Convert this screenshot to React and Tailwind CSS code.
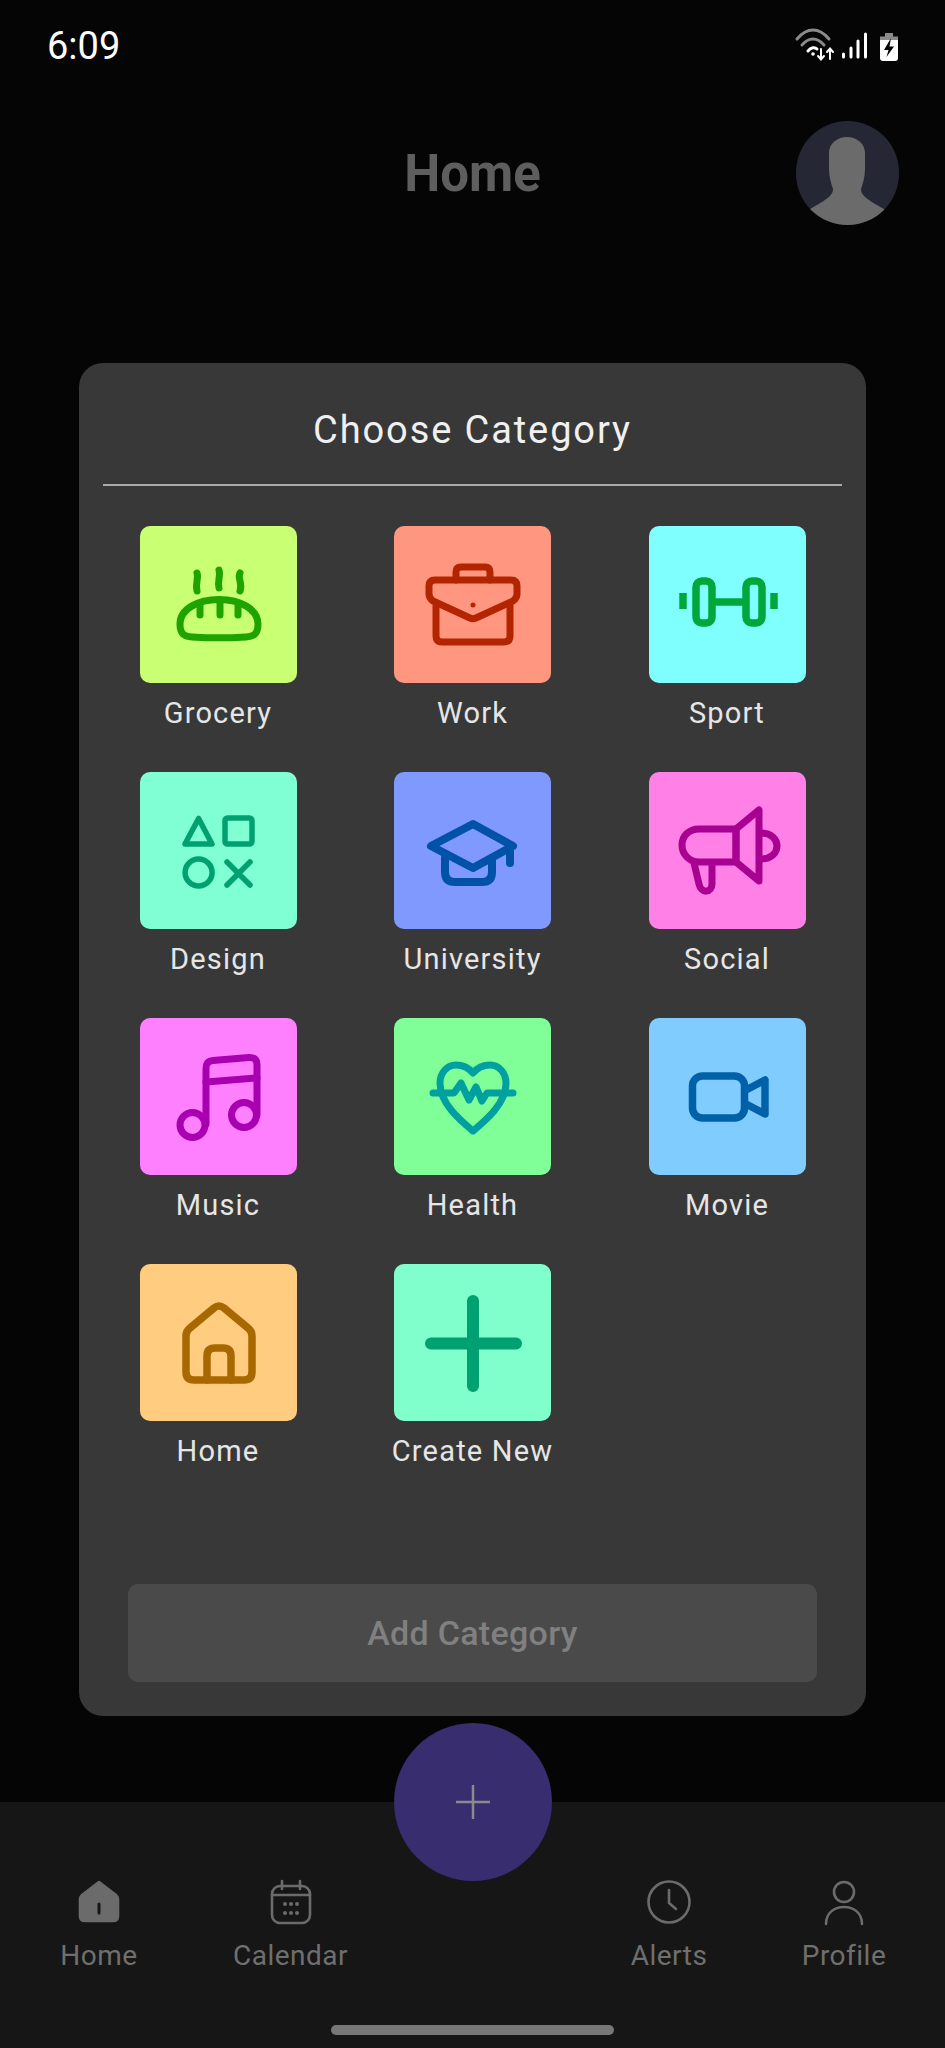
const Tile = ({ bg, color, label, children }) => (
  <div className="flex flex-col items-center w-[157px] h-[246px]">
    <div className={`w-[157px] h-[157px] rounded-[10px] shrink-0 ${bg}`}>
      <svg viewBox="0 0 157 157" className="w-full h-full" fill="none" stroke={color} strokeWidth="7" strokeLinecap="round" strokeLinejoin="round">
        {children}
      </svg>
    </div>
    <span className="mt-[10px] text-[29px] leading-[40px] tracking-[1.2px] text-[#e6e6e6] whitespace-nowrap">{label}</span>
  </div>
);

const items = [
  { label: "Grocery", bg: "bg-[#c8ff73]", color: "#1fa300", icon: (
    <>
      <path d="M79 73.5C100 73.5 118 83 118 98C118 108 114 110.5 106 111C90 112 68 112 52 111C44 110.5 40 108 40 98C40 83 58 73.5 79 73.5Z" />
      <path d="M60 79V89M80 77V89M98 79V89" />
      <path d="M57 47C59 52 55 57 57 65M79 44C81 50 77 55 79 62M100 47C97 52 103 57 100 65" />
    </>
  ) },
  { label: "Work", bg: "bg-[#ff9680]", color: "#b32400", icon: (
    <>
      <path d="M41 54H117Q123 54 123 60V68Q123 72 119 75L82 92Q79 93.5 76 92L39 75Q35 72 35 68V60Q35 54 41 54Z" />
      <path d="M42 80V110Q42 116 48 116H110Q116 116 116 110V80" />
      <path d="M62 54V46Q62 41 67 41H91Q96 41 96 46V54" />
      <circle cx="79" cy="79" r="2.5" fill="#b32400" stroke="none" />
    </>
  ) },
  { label: "Sport", bg: "bg-[#80ffff]", color: "#00a83c", icon: (
    <g strokeWidth="7.5" strokeLinecap="butt">
      <rect x="47" y="55" width="16" height="42" rx="6" />
      <rect x="97" y="55" width="16" height="42" rx="6" />
      <path d="M63 76H97M34 67V83M125 67V83" />
    </g>
  ) },
  { label: "Design", bg: "bg-[#80ffd4]", color: "#00a070", icon: (
    <g strokeWidth="5.5">
      <path d="M58.6 46.5L72 72H45Z" />
      <rect x="85" y="46" width="27" height="26" rx="2.5" />
      <circle cx="58.6" cy="100.5" r="13.5" />
      <path d="M87 90L110 113M110 90L87 113" />
    </g>
  ) },
  { label: "University", bg: "bg-[#8099ff]", color: "#0052a8", icon: (
    <g strokeWidth="8">
      <path d="M79 52L119 74L79 96L37 74Z" />
      <path d="M51 86V100Q51 110 61 110H88Q98 110 98 100V86" />
      <path d="M116 74V91" />
    </g>
  ) },
  { label: "Social", bg: "bg-[#ff80e6]", color: "#a80090", icon: (
    <>
      <path d="M87 57H50C40 57 33 64 33 73C33 82 40 90 50 90H87Z" />
      <path d="M87 57L110 38V109L87 90Z" />
      <path d="M112 61C122 61 128 67 128 74C128 81 122 87 112 87" />
      <path d="M45 91L50 112C52 122 63 121 63 112L63 91" />
    </>
  ) },
  { label: "Music", bg: "bg-[#ff80ff]", color: "#a800b0", icon: (
    <>
      <path d="M66 106V50Q66 43 73 42.5L109 39.5Q117 39 117 47V97" />
      <path d="M66 64L117 60" />
      <circle cx="52.5" cy="107" r="12.5" />
      <circle cx="104" cy="97" r="12.5" />
    </>
  ) },
  { label: "Health", bg: "bg-[#80ff99]", color: "#00a0a0", icon: (
    <>
      <path d="M79 55C74 49 68 47 62 47C53 47 46 55 46 65C46 86 67 103 79 113C91 103 112 86 112 65C112 55 105 47 96 47C90 47 84 49 79 55Z" />
      <path d="M39 75H60L67 65L75 82L82 69L88 83L93 75H119" />
    </>
  ) },
  { label: "Movie", bg: "bg-[#80ccff]", color: "#0060a8", icon: (
    <g strokeWidth="7.5">
      <rect x="43.5" y="58" width="52" height="42" rx="10" />
      <path d="M97 72L116 62V96L97 86" />
    </g>
  ) },
  { label: "Home", bg: "bg-[#ffcc80]", color: "#a86800", icon: (
    <g strokeWidth="7.5">
      <path d="M46 72Q46 67 50 64L74 44Q79 40 84 44L108 64Q112 67 112 72V108Q112 116 104 116H54Q46 116 46 108Z" />
      <path d="M67 116V92Q67 84 75 84H83Q91 84 91 92V116" />
    </g>
  ) },
  { label: "Create New", bg: "bg-[#80ffcc]", color: "#00a070", icon: (
    <path d="M79 37V122M37 79.5H122" strokeWidth="12" />
  ) },
];

const NavItem = ({ label, w, children }) => (
  <div className={`flex flex-col items-center ${w}`}>
    <svg viewBox="0 0 48 48" className="w-[48px] h-[48px]" fill="none" stroke="#6b6b6b" strokeWidth="2.6" strokeLinecap="round" strokeLinejoin="round">
      {children}
    </svg>
    <span className="mt-[10px] text-[28px] leading-[40px] tracking-[0.5px] text-[#6f6f6f] whitespace-nowrap">{label}</span>
  </div>
);

export default function App() {
  return (
    <div className="relative w-[945px] h-[2048px] overflow-hidden bg-[#050505] flex flex-col font-['Roboto',sans-serif]">
      <div className="flex items-center justify-between h-[90px] pl-[47px] pr-[35px] shrink-0">
        <span className="text-[38px] leading-[40px] text-white pt-[1px]">6:09</span>
        <svg viewBox="0 0 130 50" className="w-[130px] h-[50px]" fill="none" strokeLinecap="round">
          <path d="M17 19C27 7 39 7 49 19" stroke="#8a8a8a" strokeWidth="3" />
          <path d="M22 25C29 17 37 17 44 25" stroke="#8a8a8a" strokeWidth="3" />
          <path d="M28 31C31 27 35 27 37 29" stroke="#fff" strokeWidth="3" />
          <circle cx="33" cy="34" r="1.8" fill="#fff" />
          <path d="M41 29V39M38 36L41 39.5L44 36M50 39V29M47 32L50 28.5L53 32" stroke="#fff" strokeWidth="2" />
          <path d="M63.5 34V37M71 28V37M78 21V37M85.5 14V37" stroke="#fff" strokeWidth="3" />
          <path d="M105 13H113V16.5H118V26H100V16.5H105Z" fill="#8a8a8a" />
          <path d="M100 26H118V38Q118 41 115 41H103Q100 41 100 38Z" fill="#fff" />
          <path d="M100 20H118V26H100Z" fill="#fff" />
          <path d="M111 18L104 30H108.5L106.5 37L114 26.5H109.5Z" fill="#050505" />
        </svg>
      </div>

      <div className="grid grid-cols-[1fr_auto_1fr] items-center pl-[46px] pr-[46px] pt-[31px] shrink-0">
        <div />
        <span className="text-[51px] leading-[56px] font-bold text-[#5e5e5e] pt-[2px]">Home</span>
        <div className="justify-self-end w-[103px] h-[104px] rounded-full overflow-hidden bg-[#252734]">
          <svg viewBox="0 0 103 104" className="w-full h-full" fill="#6b6b6b">
            <path d="M51 16C60 16 69 22 69 32V48C69 56 67 62 65 68C65 74 70 78 88 88L88 104H14V88C32 78 37 74 37 68C35 62 33 56 33 48V32C33 22 42 16 51 16Z" />
          </svg>
        </div>
      </div>

      <div className="flex-1" />

      <div className="h-[246px] shrink-0 bg-[#161616] flex pt-[76px]">
        <NavItem label="Home" w="w-[198px]">
          <path d="M24 4L41 17Q43 19 43 22V38Q43 43 38 43H10Q5 43 5 38V22Q5 19 7 17Z" fill="#6b6b6b" />
          <path d="M24 26V35" stroke="#161616" strokeWidth="3" />
        </NavItem>
        <NavItem label="Calendar" w="w-[185px]">
          <rect x="5" y="8" width="38" height="37" rx="8" />
          <path d="M15 3V11M33 3V11M5 17H43" />
          <g fill="#6b6b6b" stroke="none">
            <circle cx="18" cy="26" r="2" /><circle cx="24" cy="26" r="2" /><circle cx="30" cy="26" r="2" />
            <circle cx="18" cy="35" r="2" /><circle cx="24" cy="35" r="2" /><circle cx="30" cy="35" r="2" />
          </g>
        </NavItem>
        <div className="w-[172px]" />
        <NavItem label="Alerts" w="w-[228px]">
          <circle cx="24" cy="24" r="20.5" />
          <path d="M24 12V25L31 31" />
        </NavItem>
        <NavItem label="Profile" w="w-[122px]">
          <circle cx="24" cy="14" r="10" />
          <path d="M6 46C6 35 14 29 24 29C34 29 42 35 42 46" />
        </NavItem>
      </div>

      <div className="absolute left-[331px] top-[2025px] w-[283px] h-[10px] rounded-full bg-[#777777]" />

      <div className="absolute left-[394px] top-[1723px] w-[158px] h-[158px] rounded-full bg-[#372d6f] flex items-center justify-center">
        <svg viewBox="0 0 34 34" className="w-[34px] h-[34px]" stroke="#8a8a8a" strokeWidth="2.5">
          <path d="M17 0V34M0 17H34" />
        </svg>
      </div>

      <div className="absolute left-[79px] top-[363px] w-[787px] h-[1353px] rounded-[24px] bg-[#383838] flex flex-col items-center px-[24px]">
        <div className="w-full h-[123px] shrink-0 border-b-2 border-[#aaaaaa] flex items-center justify-center pt-[13px]">
          <span className="text-[38px] tracking-[1.9px] text-[#f0f0f0] whitespace-nowrap">Choose Category</span>
        </div>
        <div className="grid grid-cols-3 gap-x-[97.5px] mt-[40px] w-[666px] h-[984px] shrink-0 content-start">
          {items.map((it) => (
            <Tile key={it.label} bg={it.bg} color={it.color} label={it.label}>{it.icon}</Tile>
          ))}
        </div>
        <div className="mt-[74px] w-[689px] h-[98px] shrink-0 rounded-[10px] bg-[#4a4a4a] flex items-center justify-center">
          <span className="text-[34px] font-medium tracking-[0.3px] text-[#808080]">Add Category</span>
        </div>
      </div>
    </div>
  );
}
